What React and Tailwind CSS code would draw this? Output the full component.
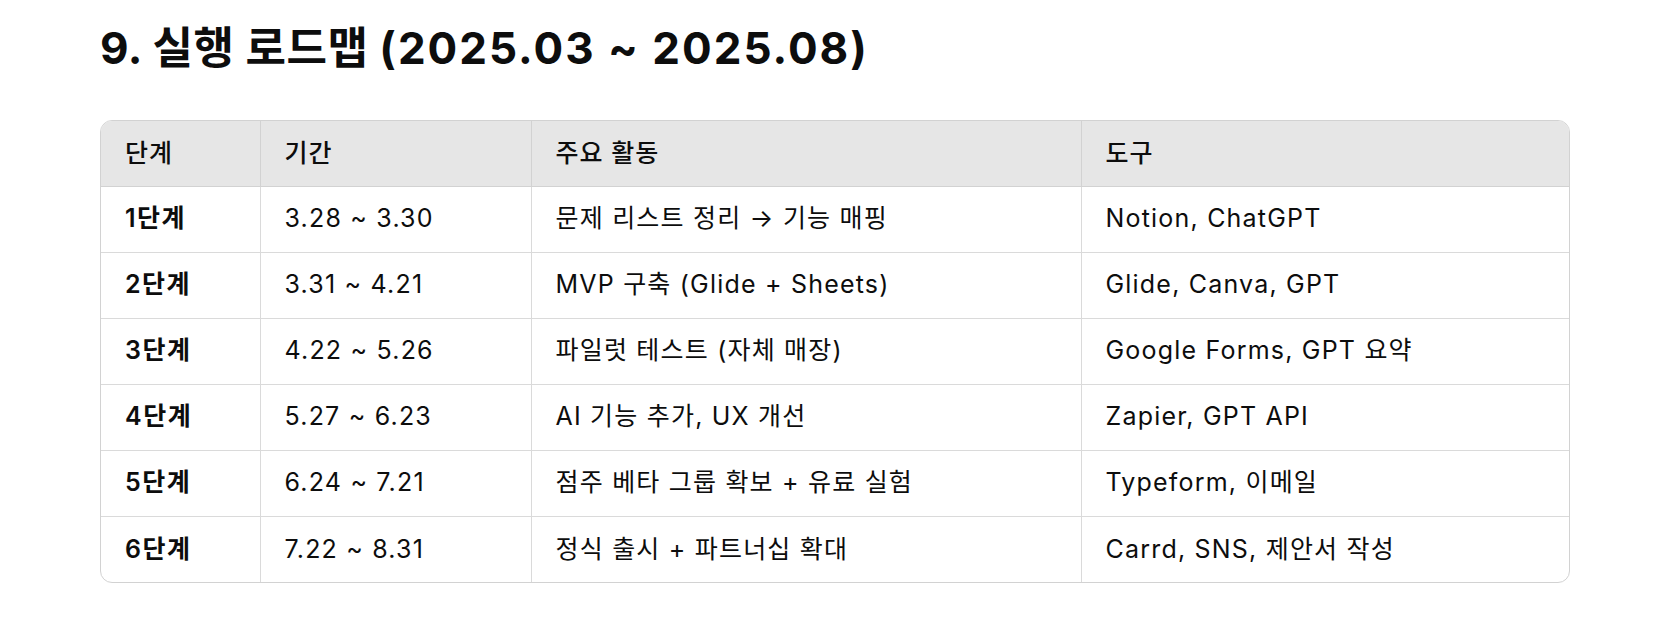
import React from "react";

const rows = [
  ["1단계", "3.28 ~ 3.30", "문제 리스트 정리 → 기능 매핑", "Notion, ChatGPT"],
  ["2단계", "3.31 ~ 4.21", "MVP 구축 (Glide + Sheets)", "Glide, Canva, GPT"],
  ["3단계", "4.22 ~ 5.26", "파일럿 테스트 (자체 매장)", "Google Forms, GPT 요약"],
  ["4단계", "5.27 ~ 6.23", "AI 기능 추가, UX 개선", "Zapier, GPT API"],
  ["5단계", "6.24 ~ 7.21", "점주 베타 그룹 확보 + 유료 실험", "Typeform, 이메일"],
  ["6단계", "7.22 ~ 8.31", "정식 출시 + 파트너십 확대", "Carrd, SNS, 제안서 작성"],
];

const font = { fontFamily: 'Inter, "Noto Sans CJK KR", sans-serif' };

export default function App() {
  return (
    <div className="w-[1658px] h-[644px] bg-white text-[#0d0d0d] pl-[100px] pt-[22px]" style={font}>
      <h1 className="text-[44px] leading-[52px] font-bold text-[#0d0d0d] whitespace-nowrap">
        <span className="tracking-[0.5px]">9. 실행 로드맵 </span>
        <span className="tracking-[2px]">(2025.03 ~ 2025.08)</span>
      </h1>
      <div className="mt-[46px] w-[1470px] rounded-xl border border-[#d2d2d2] overflow-hidden">
        <table className="w-full border-collapse table-fixed text-[25px] tracking-[1.2px]">
          <colgroup>
            <col className="w-[159px]" />
            <col className="w-[271px]" />
            <col className="w-[550px]" />
            <col />
          </colgroup>
          <thead>
            <tr className="bg-[#e6e6e6] h-[65px]">
              {["단계", "기간", "주요 활동", "도구"].map((h, i) => (
                <th
                  key={h}
                  className={`text-left font-medium tracking-[1px] px-6 py-0 border-b border-[#d2d2d2] ${i > 0 ? "border-l" : ""}`}
                >
                  {h}
                </th>
              ))}
            </tr>
          </thead>
          <tbody>
            {rows.map((r, ri) => (
              <tr key={ri} className="h-[66px]">
                {r.map((c, ci) => (
                  <td
                    key={ci}
                    className={`px-6 py-0 whitespace-nowrap border-[#dadada] ${ci > 0 ? "border-l" : ""} ${ri < rows.length - 1 ? "border-b" : ""} ${ci === 0 ? "font-semibold tracking-[1.5px]" : "font-normal"}`}
                  >
                    {c}
                  </td>
                ))}
              </tr>
            ))}
          </tbody>
        </table>
      </div>
    </div>
  );
}
